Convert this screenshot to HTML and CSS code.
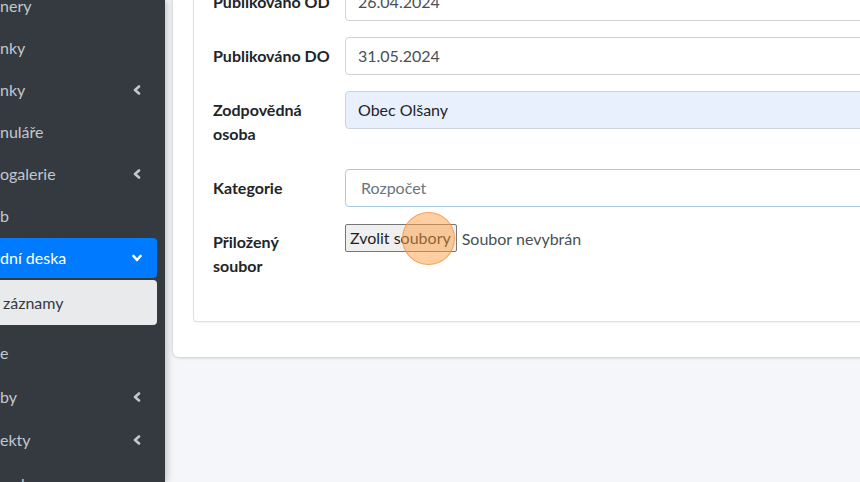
FILE: index.html
```html
<!DOCTYPE html>
<html lang="cs">
<head>
    <meta charset="UTF-8">
    <meta name="viewport" content="width=device-width, initial-scale=1.0">
    <title>Úřední deska - nový záznam</title>
    <link rel="stylesheet" href="styles.css">
</head>
<body>

    <div class="wrapper">
        <aside class="sidebar">
            <ul class="nav">
                <li><a class="nav-link">nery</a></li>
                <li><a class="nav-link">nky</a></li>
                <li><a class="nav-link">nky <svg class="chev" viewBox="0 0 8 10"><polyline points="6,1.5 2,5 6,8.5"/></svg></a></li>
                <li><a class="nav-link">nuláře</a></li>
                <li><a class="nav-link">ogalerie <svg class="chev" viewBox="0 0 8 10"><polyline points="6,1.5 2,5 6,8.5"/></svg></a></li>
                <li><a class="nav-link">b</a></li>
                <li class="open">
                    <a class="nav-link active">dní deska <svg class="chev" viewBox="0 0 10 8"><polyline points="1.5,2 5,6 8.5,2"/></svg></a>
                    <ul class="nav-treeview">
                        <li><a class="nav-link sub-active">záznamy</a></li>
                    </ul>
                </li>
                <li><a class="nav-link">e</a></li>
                <li><a class="nav-link">by <svg class="chev" viewBox="0 0 8 10"><polyline points="6,1.5 2,5 6,8.5"/></svg></a></li>
                <li><a class="nav-link">ekty <svg class="chev" viewBox="0 0 8 10"><polyline points="6,1.5 2,5 6,8.5"/></svg></a></li>
                <li><a class="nav-link">webu</a></li>
            </ul>
        </aside>

        <div class="content">
            <div class="card outer">
                <div class="card inner">
                    <div class="card-body">
                        <div class="form-row">
                            <label>Publikováno OD</label>
                            <div class="form-control">26.04.2024</div>
                        </div>
                        <div class="form-row">
                            <label>Publikováno DO</label>
                            <div class="form-control">31.05.2024</div>
                        </div>
                        <div class="form-row">
                            <label>Zodpovědná osoba</label>
                            <div class="form-control filled">Obec Olšany</div>
                        </div>
                        <div class="form-row">
                            <label>Kategorie</label>
                            <div class="form-control select">Rozpočet</div>
                        </div>
                        <div class="form-row">
                            <label>Přiložený soubor</label>
                            <div class="file-input">
                                <span class="file-btn">Zvolit soubory</span>
                                <span class="file-name">Soubor nevybrán</span>
                                <span class="click-mark"></span>
                            </div>
                        </div>
                    </div>
                </div>
            </div>
        </div>
    </div>

</body>
</html>
```

FILE: styles.css
```css
body {
    font-family: "Source Sans Pro", Lato, "Liberation Sans", sans-serif;
    font-size: 16px;
    margin: 0;
    padding: 0;
    background-color: #f4f6f9;
    color: #212529;
    overflow: hidden;
}

.wrapper {
    display: flex;
    height: 482px;
    overflow: hidden;
}

/* sidebar */
.sidebar {
    width: 165px;
    flex: none;
    background-color: #343a40;
    box-shadow: 2px 0 7px rgba(0, 0, 0, 0.22);
    overflow: hidden;
    position: relative;
    z-index: 2;
}

    .sidebar ul {
        list-style: none;
        margin: 0;
        padding: 0;
    }

.nav {
    margin: -14px 8px 0 -40px !important;
}

.nav-link {
    display: flex;
    align-items: center;
    height: 40px;
    box-sizing: border-box;
    padding: 0 16px 0 40px;
    margin-bottom: 2px;
    border-radius: 4px;
    color: #c2c7d0;
    line-height: 24px;
    white-space: pre;
}

.open ~ li .nav-link {
    margin-bottom: 3.5px;
}

    .nav-link .chev {
        margin-left: auto;
        width: 8px;
        height: 10px;
        fill: none;
        stroke: currentColor;
        stroke-width: 2.6;
        stroke-linecap: round;
        stroke-linejoin: round;
    }

    .nav-link.active {
        background-color: #007bff;
        color: white;
    }

        .nav-link.active .chev {
            width: 10px;
            height: 8px;
            margin-right: -1px;
        }

.nav-treeview {
    margin-bottom: 8px !important;
}

    .nav-treeview .nav-link {
        height: 45px;
        padding-left: 43px;
        margin-bottom: 0;
    }

.nav-link.sub-active {
    background-color: #e9eaeb;
    color: #343a40;
}

/* content */
.content {
    flex: 1;
    min-width: 0;
    padding-left: 8px;
}

.card {
    background-color: white;
}

.outer {
    margin-top: -60px;
    margin-right: -80px;
    padding: 22px 0 35px 20px;
    border-radius: 0 0 0 6px;
    box-shadow: 0 0 4px rgba(0, 0, 0, 0.12), 0 1px 3px rgba(0, 0, 0, 0.1);
}

.inner {
    border: 1px solid #dfe2e5;
    border-radius: 4px;
    box-shadow: 0 1px 2px rgba(0, 0, 0, 0.05);
}

.card-body {
    padding: 20px 19px;
}

.form-row {
    display: grid;
    grid-template-columns: 132px 1fr;
    margin-bottom: 16px;
}

    .form-row label {
        font-weight: bold;
        line-height: 24px;
        padding: 7px 15px 7px 0;
    }

.form-control {
    height: 38px;
    box-sizing: border-box;
    border: 1px solid #ced4da;
    border-radius: 4px;
    padding: 6px 12px;
    line-height: 24px;
    color: #495057;
}

    .form-control.filled {
        background-color: #e8f0fe;
        color: #212529;
    }

    .form-control.select {
        border-color: #a6cbe3;
        padding-left: 15px;
        color: #6c757d;
    }

.file-input {
    display: flex;
    align-items: center;
    gap: 5px;
    height: 28px;
    margin-top: 1px;
    position: relative;
}

.file-btn {
    height: 28px;
    box-sizing: border-box;
    padding: 1px 5px 1px 4px;
    line-height: 24px;
    background-color: #efefef;
    border: 1px solid #767676;
    border-radius: 2px;
    color: #1f1f1f;
}

.file-name {
    color: #495057;
}

.click-mark {
    position: absolute;
    left: 57px;
    top: -12px;
    width: 53px;
    height: 53px;
    border-radius: 50%;
    background-color: rgba(255, 160, 70, 0.5);
    border: 1.5px solid rgba(240, 150, 70, 0.75);
    box-sizing: border-box;
}
```
